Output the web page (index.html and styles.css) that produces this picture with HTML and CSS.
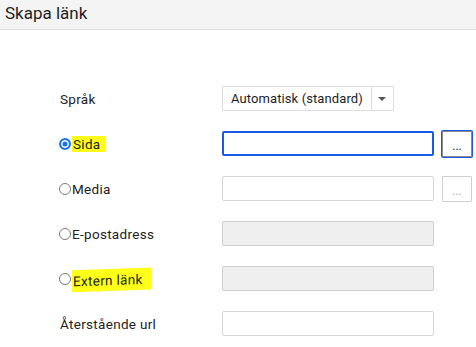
FILE: index.html
```
<!DOCTYPE html>
<html lang="sv">

<head>
    <meta charset="UTF-8">
    <title>Skapa länk</title>
    <link rel="stylesheet" href="styles.css">
</head>

<body>
    <header class="rubrik">
        <h1>Skapa länk</h1>
    </header>

    <form class="formular">
        <div class="rad">
            <span class="etikett"><span class="text">Språk</span></span>
            <div class="valj">
                <span class="valj-text">Automatisk (standard)</span>
                <span class="valj-pil"></span>
            </div>
        </div>

        <div class="rad">
            <span class="etikett"><span class="radio vald"></span><span class="text markering">Sida</span></span>
            <div class="falt aktiv"></div>
            <button type="button" class="knapp fokus">...</button>
        </div>

        <div class="rad">
            <span class="etikett"><span class="radio"></span><span class="text">Media</span></span>
            <div class="falt"></div>
            <button type="button" class="knapp av">...</button>
        </div>

        <div class="rad">
            <span class="etikett"><span class="radio"></span><span class="text">E-postadress</span></span>
            <div class="falt gra"></div>
        </div>

        <div class="rad">
            <span class="etikett"><span class="radio"></span><span class="text markering skev">Extern länk</span></span>
            <div class="falt gra"></div>
        </div>

        <div class="rad">
            <span class="etikett"><span class="text">Återstående url</span></span>
            <div class="falt"></div>
        </div>
    </form>
</body>

</html>
```

FILE: styles.css
```
* {
    margin: 0;
    padding: 0;
    box-sizing: border-box;
}

body {
    margin: 0;
    background: white;
    font-family: Roboto, "Liberation Sans", sans-serif;
    color: #222;
}

.rubrik {
    height: 30px;
    background: #f4f4f4;
    border-bottom: 1px solid #e2e2e2;
    padding: 3px 0 0 5px;
}

.rubrik h1 {
    font-size: 17px;
    font-weight: normal;
    line-height: 20px;
    color: #1e1e1e;
}

.formular {
    display: flex;
    flex-direction: column;
    gap: 20px;
    padding: 56px 0 0 60px;
}

.rad {
    display: flex;
    align-items: center;
    height: 25px;
}

.etikett {
    width: 162px;
    height: 25px;
    flex: none;
    display: flex;
    align-items: center;
    font-size: 13.5px;
    letter-spacing: 0.3px;
    line-height: 16px;
    color: #222;
}

.text {
    white-space: nowrap;
}

.radio {
    width: 12px;
    height: 12px;
    border: 1px solid #7a7a7a;
    border-radius: 50%;
    margin: 0 1px 0 -1px;
    flex: none;
}

.radio.vald {
    border: 2px solid #1a73e8;
    background: #1a73e8;
    box-shadow: inset 0 0 0 1.5px white;
}

.markering {
    background: #ffff1a;
    padding: 0 6px 0 1px;
}

.markering.skev {
    padding: 3px 8px 3px 1px;
    margin-top: 2px;
    transform: skewY(-2deg);
}

.valj {
    width: 172px;
    height: 25px;
    display: flex;
    border: 1px solid #dedede;
    font-size: 13px;
    letter-spacing: 0.1px;
    background: white;
}

.valj-text {
    flex: 1;
    padding: 4px 0 0 8px;
    color: #1e1e1e;
    border-right: 1px solid #dedede;
}

.valj-pil {
    width: 21px;
    position: relative;
}

.valj-pil::after {
    content: "";
    position: absolute;
    left: 6px;
    top: 10px;
    border-left: 4px solid transparent;
    border-right: 4px solid transparent;
    border-top: 4px solid #555;
}

.falt {
    width: 212px;
    height: 25px;
    border: 1px solid #d6d6d6;
    border-radius: 2px;
    background: white;
}

.falt.aktiv {
    border: 2px solid #1a5ae8;
}

.falt.gra {
    background: #efefef;
    border-color: #cfcfcf;
}

.knapp {
    width: 30px;
    height: 26px;
    margin-left: 8px;
    background: white;
    border: 1px solid #8a8a8a;
    border-radius: 1px;
    font-size: 12px;
    font-family: Roboto, "Liberation Sans", sans-serif;
    color: #222;
    line-height: 14px;
    padding-top: 4px;
}

.knapp.fokus {
    box-shadow: 0 0 0 1px #1a5ae8;
}

.knapp.av {
    border-color: #cfcfcf;
    color: #aaa;
}
```
